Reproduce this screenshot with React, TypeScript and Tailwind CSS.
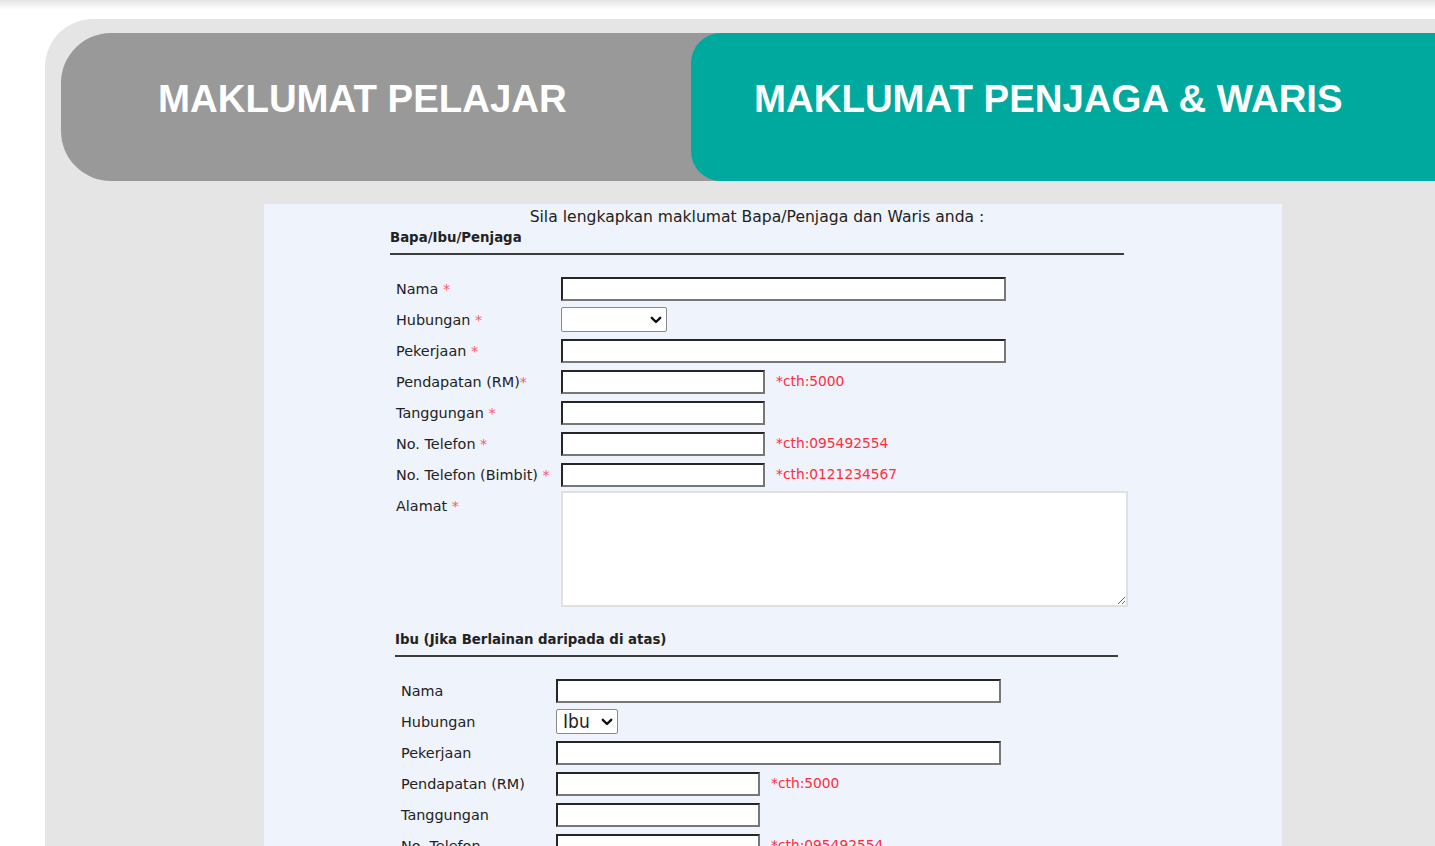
import React from "react";

// One label/field row of the guardian form.
interface FieldRow {
  label: string;
  required?: boolean;
  kind: "long" | "short" | "select";
  hint?: string;
  selectValue?: string;
  selectWidth?: string;
}

const fatherRows: FieldRow[] = [
  { label: "Nama", required: true, kind: "long" },
  { label: "Hubungan", required: true, kind: "select", selectValue: "", selectWidth: "w-[106px]" },
  { label: "Pekerjaan", required: true, kind: "long" },
  { label: "Pendapatan (RM)", required: true, kind: "short", hint: "*cth:5000" },
  { label: "Tanggungan", required: true, kind: "short" },
  { label: "No. Telefon", required: true, kind: "short", hint: "*cth:095492554" },
  { label: "No. Telefon (Bimbit)", required: true, kind: "short", hint: "*cth:0121234567" },
];

const motherRows: FieldRow[] = [
  { label: "Nama", kind: "long" },
  { label: "Hubungan", kind: "select", selectValue: "Ibu", selectWidth: "w-[62px]" },
  { label: "Pekerjaan", kind: "long" },
  { label: "Pendapatan (RM)", kind: "short", hint: "*cth:5000" },
  { label: "Tanggungan", kind: "short" },
  { label: "No. Telefon", kind: "short", hint: "*cth:095492554" },
];

const inputBorder =
  "h-[24px] shrink-0 bg-white border-2 border-t-[#262626] border-l-[#262626] border-r-[#777777] border-b-[#777777] outline-none";

const Chevron = () => (
  <svg width="12" height="8" viewBox="0 0 12 8" className="shrink-0">
    <path d="M1.8 1.8 L6 6 L10.2 1.8" fill="none" stroke="#111" strokeWidth="2.4" strokeLinecap="round" strokeLinejoin="round" />
  </svg>
);

const Row = ({ row, labelCol }: { row: FieldRow; labelCol: string }) => (
  <div className="flex h-[31px] items-center">
    <div className={`${labelCol} shrink-0 pl-[6px] pt-[3px] text-[14.4px] text-[#222]`}>
      {row.label}
      {row.required && (
        <span className="text-[#ff5a64]">{row.label === "Pendapatan (RM)" ? "*" : " *"}</span>
      )}
    </div>
    {row.kind === "long" && <input type="text" className={`${inputBorder} w-[445px]`} />}
    {row.kind === "short" && <input type="text" className={`${inputBorder} w-[204px]`} />}
    {row.kind === "select" && (
      <div
        className={`${row.selectWidth} flex h-[25px] shrink-0 items-center justify-between rounded-[2px] border border-[#8a8a8a] bg-white pl-[6px] pr-[4px]`}
      >
        <span className="font-['DejaVu_Sans_Condensed','DejaVu_Sans',sans-serif] text-[19px] leading-none text-[#222]">
          {row.selectValue}
        </span>
        <Chevron />
      </div>
    )}
    {row.hint && <span className="ml-[11px] whitespace-nowrap text-[13.8px] text-[#ff2d3d]">{row.hint}</span>}
  </div>
);

export default function App() {
  return (
    <div className="min-h-screen overflow-hidden bg-white font-['DejaVu_Sans',sans-serif]">
      {/* shadow of the bar above */}
      <div className="h-[19px] bg-gradient-to-b from-[#e4e4e4] via-white to-white" />

      <div className="ml-[45px] rounded-tl-[48px] bg-[#e5e5e5] pl-[16px] pt-[14px] pb-[40px]">
        {/* Tabs */}
        <div className="flex h-[148px]">
          <div className="w-[660px] shrink-0 rounded-l-[50px] bg-[#999999] pl-[97px] pt-[47px]">
            <span className="font-['Liberation_Sans',Arial,sans-serif] text-[38.4px] font-bold leading-none text-white">
              MAKLUMAT PELAJAR
            </span>
          </div>
          <div className="-ml-[30px] flex-1 rounded-l-[30px] bg-[#00a99d] pl-[63px] pt-[47px]">
            <span className="font-['Liberation_Sans',Arial,sans-serif] text-[38.4px] font-bold leading-none text-white">
              MAKLUMAT PENJAGA &amp; WARIS
            </span>
          </div>
        </div>

        {/* Form panel */}
        <div className="ml-[203px] mt-[23px] w-[1018px] bg-[#eff3fb] pt-[4px] pb-[20px]">
          <div className="ml-[126px] w-[734px]">
            <p className="whitespace-nowrap text-center text-[15.6px] leading-[18px] text-[#222]">
              Sila lengkapkan maklumat Bapa/Penjaga dan Waris anda :
            </p>
            <p className="mt-[2px] font-['DejaVu_Sans_Condensed','DejaVu_Sans',sans-serif] text-[14.8px] font-bold leading-[18px] text-[#222]">
              Bapa/Ibu/Penjaga
            </p>
            <div className="mt-[7px] h-[2px] bg-[#3d3d3d]" />

            <div className="mt-[18px]">
              {fatherRows.map((r) => (
                <Row key={r.label} row={r} labelCol="w-[171px]" />
              ))}
              <div className="mt-[1px] flex">
                <div className="w-[171px] shrink-0 pl-[6px] pt-[5px] text-[14.4px] text-[#222]">
                  Alamat<span className="text-[#ff5a64]"> *</span>
                </div>
                <textarea className="h-[116px] w-[567px] shrink-0 resize-y border-2 border-[#e0e0e0] bg-white outline-none" />
              </div>
            </div>
          </div>

          {/* Mother section */}
          <div className="ml-[131px] mt-[23px] w-[723px]">
            <p className="font-['DejaVu_Sans_Condensed','DejaVu_Sans',sans-serif] text-[14.8px] font-bold leading-[18px] text-[#222]">
              Ibu (Jika Berlainan daripada di atas)
            </p>
            <div className="mt-[7px] h-[2px] bg-[#3d3d3d]" />
            <div className="mt-[18px]">
              {motherRows.map((r) => (
                <Row key={r.label} row={r} labelCol="w-[161px]" />
              ))}
            </div>
          </div>
        </div>
      </div>
    </div>
  );
}
